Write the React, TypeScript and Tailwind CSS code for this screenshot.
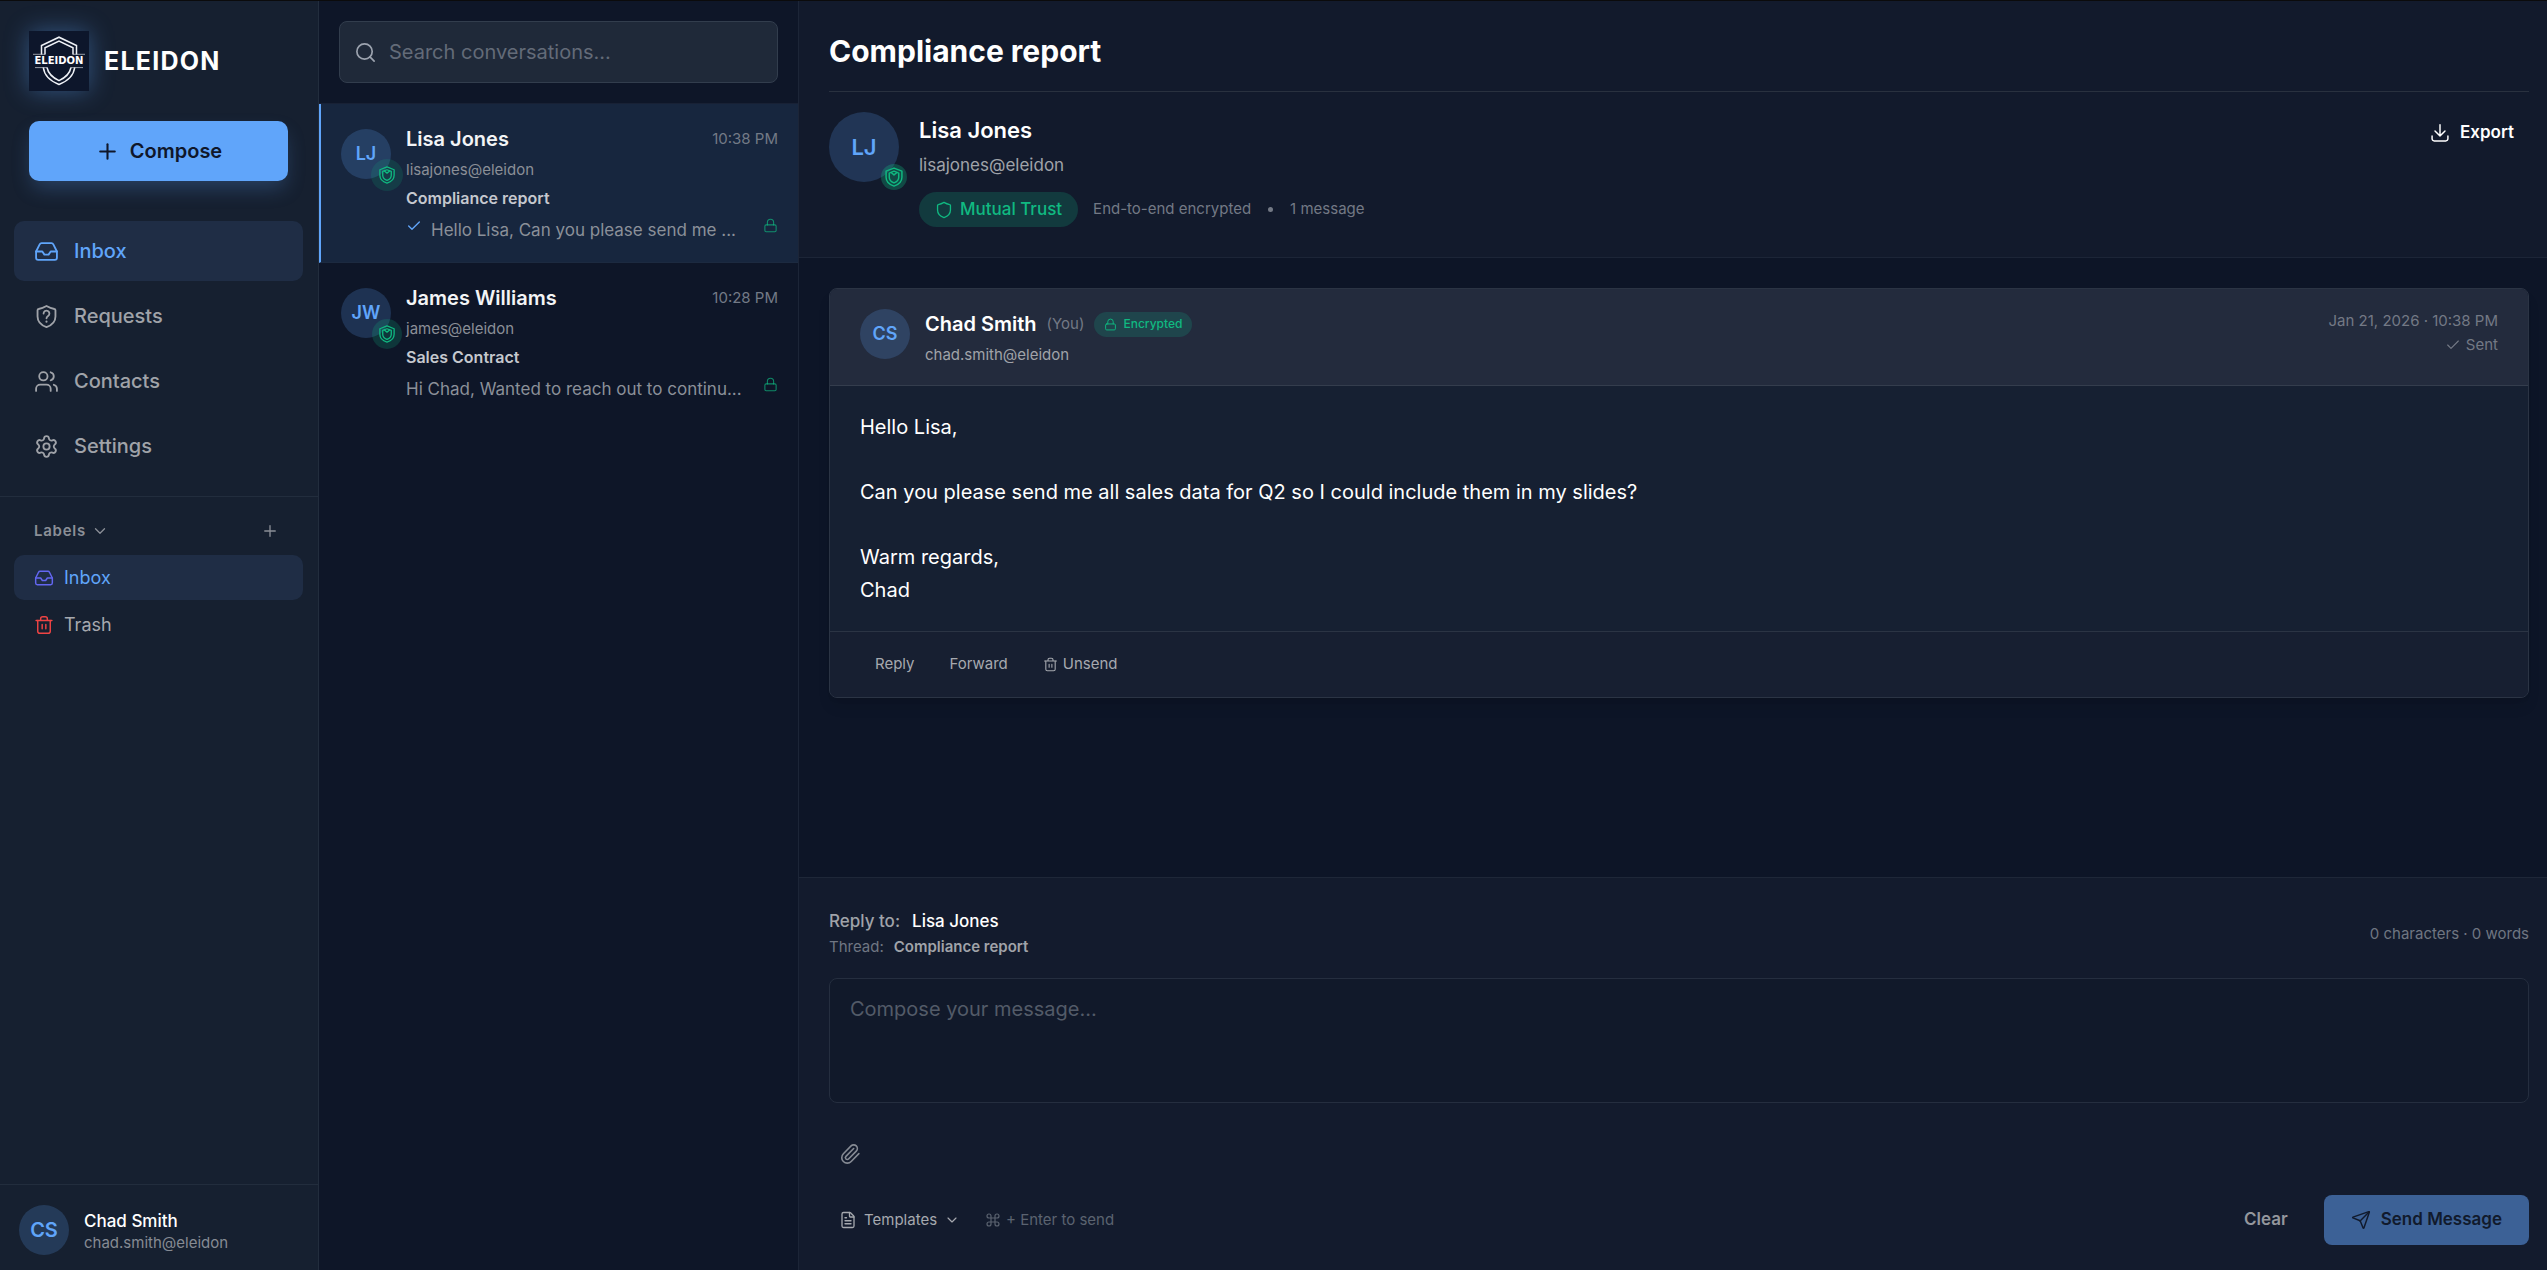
import type { ReactNode } from 'react';
import { Check, ChevronDown, Command, FileText, Inbox, Lock, Paperclip, Plus, Search, Send, Settings, Users } from 'lucide-react';
import clsx from 'clsx';

interface IconProps {
  size?: number;
  className?: string;
}

interface Conversation {
  name: string;
  initials: string;
  address: string;
  subject: string;
  preview: string;
  time: string;
  sent: boolean;
  active: boolean;
}

const CONVERSATIONS: Conversation[] = [
  {
    name: 'Lisa Jones',
    initials: 'LJ',
    address: 'lisajones@eleidon',
    subject: 'Compliance report',
    preview: 'Hello Lisa, Can you please send me ...',
    time: '10:38 PM',
    sent: true,
    active: true,
  },
  {
    name: 'James Williams',
    initials: 'JW',
    address: 'james@eleidon',
    subject: 'Sales Contract',
    preview: 'Hi Chad, Wanted to reach out to continu...',
    time: '10:28 PM',
    sent: false,
    active: false,
  },
];

const MESSAGE = `Hello Lisa,

Can you please send me all sales data for Q2 so I could include them in my slides?

Warm regards,
Chad`;

const Svg: React.FC<IconProps & { children: ReactNode }> = ({ size = 20, className, children }) => (
  <svg
    width={size}
    height={size}
    viewBox="0 0 24 24"
    fill="none"
    stroke="currentColor"
    strokeWidth="1.75"
    strokeLinecap="round"
    strokeLinejoin="round"
    className={clsx('shrink-0', className)}
    aria-hidden="true"
  >
    {children}
  </svg>
);

const SHIELD = 'M12 1.9c2.6 1.5 5 2.4 7.6 2.9.6.1 1 .6 1 1.2V12c0 4.8-3.3 8.3-8.6 10.2C6.7 20.3 3.4 16.8 3.4 12V6c0-.6.4-1.1 1-1.2C7 4.3 9.4 3.4 12 1.9z';

const ShieldIcon: React.FC<IconProps> = (props) => (
  <Svg {...props}>
    <path d={SHIELD} />
  </Svg>
);

const ShieldQuestionIcon: React.FC<IconProps> = (props) => (
  <Svg {...props}>
    <path d={SHIELD} />
    <path d="M9.2 9.2a2.8 2.8 0 1 1 4.3 2.3c-.9.6-1.5 1.1-1.5 2.2" />
    <path d="M12 16.9v.05" strokeWidth="2" />
  </Svg>
);

const TrustIcon: React.FC<IconProps> = (props) => (
  <Svg {...props}>
    <path d="M12 1.3 21.5 5v7.3c0 4.9-3.6 8.7-9.5 10.6-5.9-1.9-9.5-5.7-9.5-10.6V5z" />
    <path d="M12 5 17.7 7.3v4.9c0 3.2-2.2 5.5-5.7 6.9-3.5-1.4-5.7-3.7-5.7-6.9V7.3z" />
    <path d="m8.5 6.6 3.5 2.9 3.5-2.9" />
  </Svg>
);

const TrashIcon: React.FC<IconProps> = (props) => (
  <Svg {...props}>
    <path d="M2.5 6.5h19M8 6.3V4.5A2.5 2.5 0 0 1 10.5 2h3A2.5 2.5 0 0 1 16 4.5v1.8" />
    <path d="M4.5 6.5v13A2.5 2.5 0 0 0 7 22h10a2.5 2.5 0 0 0 2.5-2.5v-13M9.8 11.5v5M14.2 11.5v5" />
  </Svg>
);

const DownloadIcon: React.FC<IconProps> = (props) => (
  <Svg {...props}>
    <path d="M2.5 15.5V19A2.5 2.5 0 0 0 5 21.5h14a2.5 2.5 0 0 0 2.5-2.5v-3.5M12 2v13.5M6 9.5l6 6 6-6" />
  </Svg>
);

const Logo = () => (
  <svg width="60" height="60" viewBox="0 0 60 60" className="shrink-0 bg-[#0d162b] shadow-[0_0_25px_rgba(96,165,250,0.4)]" role="img" aria-label="Eleidon shield">
    <g fill="none" stroke="#eef1f6" strokeWidth="1.5">
      <path d="M12.5 23.5v-9L30 6.2l17.5 8.3v9M16 23.5v-6.7l14-6.7 14 6.7v6.7" />
      <path d="M14.3 36.5c1 7.8 6.8 13.5 15.7 17 8.9-3.5 14.700-9.200 15.700-17M18 36.500c1.200 6 5.200 10 12 13.100 6.800-3.100 10.800-7.100 12-13.100" />
      <path d="M4 23.3h12M44 23.3h12M6 36.6h12M42 36.6h12" strokeWidth="1" opacity="0.6" />
    </g>
    <text x="30" y="33" textAnchor="middle" fill="#fff" fontSize="10" fontWeight="700" fontFamily="DejaVu Sans, sans-serif">
      ELEIDON
    </text>
  </svg>
);

const Avatar: React.FC<{ initials: string; className?: string }> = ({ initials, className }) => (
  <span className={clsx('flex shrink-0 items-center justify-center rounded-full bg-[#60a5fa]/20 font-semibold text-[#60a5fa]', className)}>
    {initials}
  </span>
);

const NavLink: React.FC<{ icon: ReactNode; label: string; active?: boolean }> = ({ icon, label, active }) => (
  <a
    href="#"
    className={clsx(
      'flex h-[60px] items-center gap-[15px] rounded-[10px] px-5 text-xl font-medium',
      active ? 'bg-[#1f2d45] text-[#60a5fa]' : 'text-[#a0a3a9]',
    )}
  >
    {icon}
    {label}
  </a>
);

const Sidebar = () => (
  <aside className="flex w-[319px] shrink-0 flex-col border-r border-[#222d3d] bg-[#162030]">
    <div className="flex items-center gap-[15px] px-[29px] pt-[30px]">
      <Logo />
      <span className="text-[25px] leading-8 font-bold tracking-wider text-white">ELEIDON</span>
    </div>
    <div className="pt-[30px] pr-[30px] pl-[29px]">
      <button className="flex h-[60px] w-full items-center justify-center gap-2.5 rounded-[10px] bg-[#60a5fa] text-xl font-semibold text-[#0f172a] shadow-[0_10px_20px_-3px_rgba(96,165,250,0.25)]">
        <Plus size={25} strokeWidth={2} />
        Compose
      </button>
    </div>
    <nav className="flex flex-col gap-[5px] pt-10 pr-[15px] pb-5 pl-3.5" aria-label="Main">
      <NavLink icon={<Inbox size={25} strokeWidth={1.75} />} label="Inbox" active />
      <NavLink icon={<ShieldQuestionIcon size={25} />} label="Requests" />
      <NavLink icon={<Users size={25} strokeWidth={1.75} />} label="Contacts" />
      <NavLink icon={<Settings size={25} strokeWidth={1.75} />} label="Settings" />
    </nav>
    <div className="border-t border-[#222d3d] pt-5 pr-[15px] pl-3.5">
      <div className="flex h-7 items-center justify-between pr-6 pl-5 text-[#8b8f97]">
        <button className="flex items-center gap-[5px] text-[15px] font-semibold tracking-wider">
          Labels
          <ChevronDown size={18} strokeWidth={1.75} />
        </button>
        <button aria-label="Add label">
          <Plus size={18} strokeWidth={1.75} />
        </button>
      </div>
      <div className="flex flex-col gap-0.5 pt-2.5 text-lg">
        <a href="#" className="flex h-[45px] items-center gap-2.5 rounded-[10px] bg-[#1f2d45] px-5 text-[#60a5fa]">
          <Inbox size={20} strokeWidth={1.75} className="text-[#6366f1]" />
          Inbox
        </a>
        <a href="#" className="flex h-[45px] items-center gap-2.5 rounded-[10px] px-5 text-[#a6a9af]">
          <TrashIcon size={20} className="text-[#ef4444]" />
          Trash
        </a>
      </div>
    </div>
    <div className="mt-auto flex items-center gap-[15px] border-t border-[#222d3d] px-[19px] pt-5 pb-[15px]">
      <Avatar initials="CS" className="size-[50px] text-xl" />
      <div className="pt-0.5">
        <p className="text-[17px] leading-6 font-medium text-white">Chad Smith</p>
        <p className="text-[15px] leading-5 text-[#868b94]">chad.smith@eleidon</p>
      </div>
    </div>
  </aside>
);

const ConversationRow: React.FC<{ item: Conversation }> = ({ item }) => (
  <a
    href="#"
    className={clsx(
      'flex gap-[15px] border-b border-l-2 p-5',
      item.active ? 'border-b-[#1c2a40] border-l-[#60a5fa] bg-[#17263e]' : 'border-transparent',
    )}
  >
    <span className="relative mt-[5px] size-[50px] shrink-0">
      <Avatar initials={item.initials} className="size-[50px] text-lg" />
      <span
        className={clsx(
          'absolute flex items-center justify-center rounded-full text-[#10b981]',
          item.active ? '-right-3 -bottom-3 size-8 bg-[#10b981]/15' : '-right-[11px] -bottom-[11px] size-[30px] bg-[#10b981]/20',
        )}
      >
        <TrustIcon size={18} />
      </span>
    </span>
    <div className="min-w-0 flex-1">
      <div className="flex h-[30px] items-center justify-between">
        <span className="text-xl font-semibold text-[#f3f4f6]">{item.name}</span>
        <time className="text-[15px] text-[#737a86]">{item.time}</time>
      </div>
      <p className="mt-[6px] text-[15px] leading-5 text-[#8b8f97]">{item.address}</p>
      <p className="mt-1.5 text-base leading-6 font-semibold text-[#c5c8ce]">{item.subject}</p>
      <div className="mt-2.5 flex h-[22px] items-center gap-[9px]">
        {item.sent && <Check size={16} strokeWidth={2} className="mb-2.5 shrink-0 text-[#60a5fa]" />}
        <span className="min-w-0 flex-1 text-[17px] whitespace-nowrap text-[#8b9099]">{item.preview}</span>
        <Lock size={15} strokeWidth={1.75} className="mb-3 shrink-0 text-[#10b981]/70" />
      </div>
    </div>
  </a>
);

const ConversationList = () => (
  <section className="flex w-[480px] shrink-0 flex-col border-r border-[#1c2537] bg-[#0e1628]">
    <div className="border-b border-[#182135] p-5">
      <label className="flex h-[62px] items-center gap-3 rounded-[8px] border border-[#323d4d] bg-[#1f2939] px-3.5">
        <Search size={23} strokeWidth={1.75} className="shrink-0 text-[#9ca3af]" />
        <input
          type="search"
          aria-label="Search conversations"
          placeholder="Search conversations..."
          className="min-w-0 flex-1 bg-transparent text-xl text-white outline-none placeholder:text-[#636b78]"
        />
      </label>
    </div>
    {CONVERSATIONS.map((item) => (
      <ConversationRow key={item.address} item={item} />
    ))}
  </section>
);

const ThreadHeader = () => (
  <header className="border-b border-[#1c2537] bg-[#121a2c] pr-[18px] pl-[30px]">
    <h1 className="border-b border-[#29313f] pt-[31px] pb-[21px] text-[30px] leading-[38px] font-bold text-white">Compliance report</h1>
    <div className="flex items-start gap-5 pt-5 pb-[30px]">
      <span className="relative size-[70px] shrink-0">
        <Avatar initials="LJ" className="size-[70px] text-[22px]" />
        <span className="absolute -right-2 -bottom-2 flex size-[26px] items-center justify-center rounded-full bg-[#10b981]/30 text-[#10b981]">
          <TrustIcon size={20} />
        </span>
      </span>
      <div className="flex-1">
        <h2 className="text-[22px] leading-9 font-semibold text-white">Lisa Jones</h2>
        <p className="mt-[5px] text-[17px] leading-6 text-[#a0a3a9]">lisajones@eleidon</p>
        <div className="mt-[15px] flex items-center gap-[15px] text-[15px] text-[#737985]">
          <span className="flex h-[35px] items-center gap-[7px] rounded-full bg-[#123a3e] px-4 text-[17px] font-medium text-[#10b981]">
            <ShieldIcon size={18} />
            Mutual Trust
          </span>
          <span className="flex items-center gap-[17px]">
            End-to-end encrypted
            <span className="size-[5px] rounded-full bg-[#737985]" />
            <span>1 message</span>
          </span>
        </div>
      </div>
      <button className="flex h-[42px] items-center gap-2.5 px-[15px] text-[17px] font-semibold text-white">
        <DownloadIcon size={20} />
        Export
      </button>
    </div>
  </header>
);

const MessageCard = () => (
  <article className="overflow-hidden rounded-[8px] border border-[#2b3444] bg-[#162032] shadow-lg">
    <header className="flex items-start gap-[15px] border-b border-[#343d4d] bg-[#232b3d] px-[30px] py-5">
      <Avatar initials="CS" className="size-[50px] text-lg" />
      <div className="flex-1">
        <div className="flex h-[30px] items-center gap-2.5">
          <span className="text-xl font-semibold text-white">Chad Smith</span>
          <span className="text-[15px] text-[#737985]">(You)</span>
          <span className="flex h-[25px] items-center gap-1.5 rounded-full bg-[#1f454c] px-2.5 text-xs font-medium text-[#10b981]">
            <Lock size={13} strokeWidth={1.75} />
            Encrypted
          </span>
        </div>
        <p className="mt-[6px] text-[15px] leading-5 text-[#a0a3a9]">chad.smith@eleidon</p>
      </div>
      <div className="text-right text-[15px] leading-6 text-[#737985]">
        <time className="block">Jan 21, 2026 · 10:38 PM</time>
        <span className="flex items-center justify-end gap-[5px]">
          <Check size={16} strokeWidth={1.75} />
          Sent
        </span>
      </div>
    </header>
    <div className="px-[30px] py-[25px] text-xl leading-relaxed whitespace-pre-line text-white">{MESSAGE}</div>
    <footer className="flex items-center gap-[5px] border-t border-[#2b3444] bg-[#171f31] px-[30px] py-[15px] text-[15px] text-[#a6a9af]">
      <button className="h-[35px] px-[15px]">Reply</button>
      <button className="h-[35px] px-[15px]">Forward</button>
      <button className="flex h-[35px] items-center gap-[5px] px-[15px]">
        <TrashIcon size={15} />
        Unsend
      </button>
    </footer>
  </article>
);

const ReplyBox = () => (
  <form className="border-t border-[#1e2738] bg-[#131b2d] pt-[30px] pr-[18px] pb-[25px] pl-[30px]">
    <div className="flex items-center justify-between">
      <div>
        <p className="text-[17px] leading-[26px] font-medium text-[#a0a3a9]">
          Reply to:<span className="ml-3 text-white">Lisa Jones</span>
        </p>
        <p className="text-[15px] leading-[26px] text-[#6f7682]">
          Thread:<span className="ml-2.5 font-semibold text-[#a0a3a9]">Compliance report</span>
        </p>
      </div>
      <span className="text-[15px] text-[#6f7682]">0 characters · 0 words</span>
    </div>
    <textarea
      aria-label="Message"
      placeholder="Compose your message..."
      className="mt-[18px] block h-[125px] w-full resize-none rounded-[8px] border border-[#252e3f] bg-[#11192a] px-5 py-[15px] text-xl leading-[30px] text-white outline-none placeholder:text-[#535b68]"
    />
    <button type="button" aria-label="Attach file" className="mt-[30px] flex h-[42px] items-center px-2.5 text-[#868b94]">
      <Paperclip size={22} strokeWidth={1.75} />
    </button>
    <div className="mt-5 flex items-center">
      <button type="button" className="flex items-center gap-[7px] px-2.5 text-[15px] text-[#a6a9af]">
        <FileText size={18} strokeWidth={1.75} />
        Templates
        <ChevronDown size={16} strokeWidth={1.75} />
      </button>
      <span className="ml-[15px] flex items-center gap-[5px] text-[15px] text-[#5b6370]">
        <Command size={16} strokeWidth={1.75} />
        + Enter to send
      </span>
      <button type="reset" className="ml-auto h-[50px] px-5 text-[17px] font-semibold text-[#94979d]">
        Clear
      </button>
      <button type="submit" className="ml-4 flex h-[50px] items-center gap-2.5 rounded-[8px] bg-[#3c6196] px-[27px] text-[17px] font-semibold text-[#111a2c]">
        <Send size={20} strokeWidth={1.75} />
        Send Message
      </button>
    </div>
  </form>
);

export default function App() {
  return (
    <div className="flex h-screen bg-[#0d1527] pt-px font-['Inter',sans-serif] shadow-[inset_0_1px_0_#0b0b0c]">
      <Sidebar />
      <ConversationList />
      <main className="flex min-w-0 flex-1 flex-col">
        <ThreadHeader />
        <div className="min-h-0 flex-1 overflow-y-auto pt-[30px] pr-[18px] pl-[30px]">
          <MessageCard />
        </div>
        <ReplyBox />
      </main>
    </div>
  );
}
